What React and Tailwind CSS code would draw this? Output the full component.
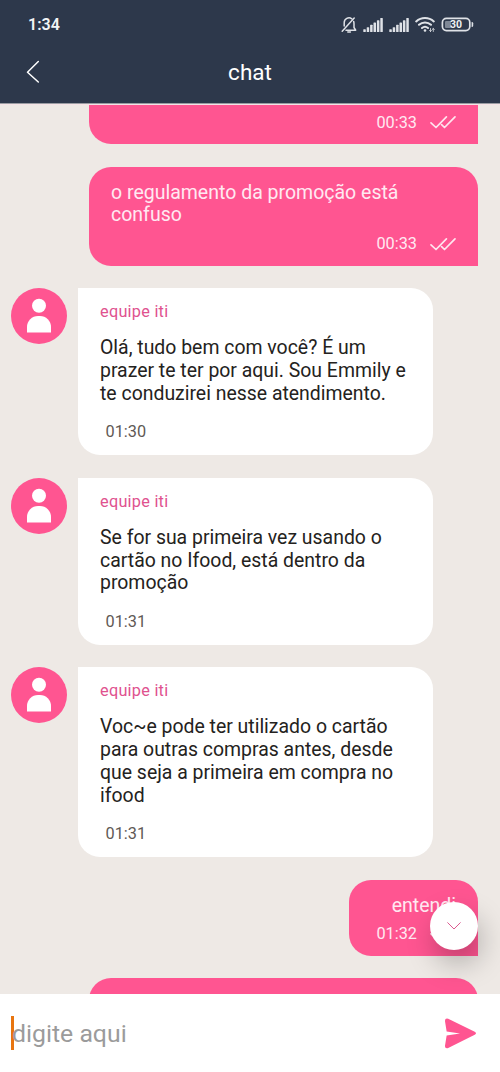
const messages = [
  { id: 1, mine: true, clipped: true, time: "00:33", lines: [] },
  {
    id: 2,
    mine: true,
    time: "00:33",
    lines: ["o regulamento da promoção está", "confuso"],
  },
  {
    id: 3,
    time: "01:30",
    lines: [
      "Olá, tudo bem com você? É um",
      "prazer te ter por aqui. Sou Emmily e",
      "te conduzirei nesse atendimento.",
    ],
  },
  {
    id: 4,
    time: "01:31",
    lines: [
      "Se for sua primeira vez usando o",
      "cartão no Ifood, está dentro da",
      "promoção",
    ],
  },
  {
    id: 5,
    time: "01:31",
    lines: [
      "Voc~e pode ter utilizado o cartão",
      "para outras compras antes, desde",
      "que seja a primeira em compra no",
      "ifood",
    ],
  },
  { id: 6, mine: true, short: true, time: "01:32", lines: ["entendi"] },
];

function SignalIcon() {
  return (
    <svg width="20" height="16" viewBox="0 0 20 16" fill="#dfe2e7">
      <rect x="0.3" y="12.2" width="2.5" height="2.8" rx="0.6" />
      <rect x="3.7" y="10.2" width="2.5" height="4.8" rx="0.6" />
      <rect x="7.1" y="7.7" width="2.5" height="7.3" rx="0.6" />
      <rect x="10.5" y="5.4" width="2.5" height="9.6" rx="0.6" />
      <rect x="13.9" y="3.2" width="2.5" height="11.8" rx="0.6" />
      <rect x="17.3" y="1" width="2.5" height="14" rx="0.6" />
    </svg>
  );
}

function StatusBar() {
  return (
    <div className="flex h-[49px] items-center justify-between pl-[28px] pr-[26px]">
      <span className="text-[16px] font-semibold leading-none text-[#f2f4f6]">
        1:34
      </span>
      <div className="flex items-center">
        <svg
          className="mr-[6px]"
          width="16"
          height="18"
          viewBox="0 0 16 18"
          fill="none"
          stroke="#dfe2e7"
          strokeWidth="1.5"
          strokeLinecap="round"
          strokeLinejoin="round"
        >
          <path d="M3.2 10V6.8a4.8 4.8 0 0 1 7.6-4M12.7 5.5q.3 1 .3 2.500v3.500l1.700 2.700H5" />
          <path d="M6.8 16h2.600M1.200 15.200 13.200 2" />
        </svg>
        <SignalIcon />
        <div className="ml-[6px]">
          <SignalIcon />
        </div>
        <svg
          className="ml-[6px]"
          width="20"
          height="17"
          viewBox="0 0 20 17"
          fill="none"
          stroke="#dfe2e7"
          strokeWidth="2"
          strokeLinecap="round"
        >
          <path d="M1.2 5.4a13 13 0 0 1 17.6 0M4 8.8a8.7 8.7 0 0 1 12 0M7 12a4.6 4.6 0 0 1 6 0" />
          <circle cx="10" cy="14.5" r="1.3" fill="#dfe2e7" stroke="none" />
          <path
            d="M15.5 12.5v3m-1-1 1 1 1-1M18.3 15.5v-3m-1 1 1-1 1 1"
            strokeWidth="0.8"
          />
        </svg>
        <svg className="ml-[6px]" width="33" height="15" viewBox="0 0 33 15">
          <rect
            x="1.4"
            y="1.4"
            width="27.4"
            height="12.2"
            rx="4"
            fill="none"
            stroke="#dfe2e7"
            strokeWidth="1.7"
          />
          <rect x="4" y="4" width="6" height="7" rx="1" fill="#7e8795" />
          <path d="M30.6 5h.6q1 .2 1 1.200v2.600q0 1-1 1.200h-.6z" fill="#dfe2e7" />
          <text
            x="15.1"
            y="11.2"
            textAnchor="middle"
            fill="#eef0f3"
            className="text-[10.5px] font-bold"
          >
            30
          </text>
        </svg>
      </div>
    </div>
  );
}

function Header() {
  return (
    <header className="h-[104px] shrink-0 border-b border-[#9a9da3] bg-[#2d384b]">
      <StatusBar />
      <div className="grid h-[46px] grid-cols-[1fr_auto_1fr] items-center">
        <button className="ml-[26px] justify-self-start" aria-label="Voltar">
          <svg
            width="14"
            height="24"
            viewBox="0 0 14 24"
            fill="none"
            stroke="#fff"
            strokeWidth="1.5"
            strokeLinecap="round"
            strokeLinejoin="round"
          >
            <path d="M12.3 1.5 1.5 12.2 12.3 22" />
          </svg>
        </button>
        <h1 className="mt-px text-[22.5px] leading-none text-white">chat</h1>
      </div>
    </header>
  );
}

function DoubleCheck() {
  return (
    <svg
      width="26"
      height="14"
      viewBox="0 0 26 14"
      fill="none"
      stroke="#ffe6ef"
      strokeWidth="1.7"
      strokeLinecap="round"
      strokeLinejoin="round"
    >
      <path d="M1 7.8 6 12.5 16.4 1.8M11.6 9.7l2.9 2.8L25 1.8" />
    </svg>
  );
}

function Avatar() {
  return (
    <div className="h-[56px] w-[56px] shrink-0 rounded-full bg-[#ff5591]">
      <svg width="56" height="56" viewBox="0 0 56 56" fill="#fff">
        <circle cx="28" cy="17.7" r="7" />
        <path d="M16 44.5V39a11 11 0 0 1 11-11h2a11 11 0 0 1 11 11v5.5z" />
      </svg>
    </div>
  );
}

function Lines({ lines }) {
  return lines.map((line) => (
    <span key={line} className="block whitespace-nowrap">
      {line}
    </span>
  ));
}

function SentMessage({ message }) {
  return (
    <div
      className={`mr-[22px] flex flex-col justify-end self-end rounded-bl-[22px] bg-[#ff5591] px-[22px] ${
        message.short
          ? "w-[129.5px] pb-[13px] pt-[15px]"
          : "w-[389px] pb-[12.5px] pt-[15px]"
      } ${message.clipped ? "h-[80px]" : "rounded-t-[22px]"}`}
    >
      {message.lines.length > 0 && (
        <p
          className={`text-[19.5px] leading-[22.8px] text-[#ffe9f1] ${
            message.short ? "text-right" : ""
          }`}
        >
          <Lines lines={message.lines} />
        </p>
      )}
      <div
        className={`flex items-center justify-end gap-[13px] text-[16.3px] leading-[19px] text-[#ffe9f1] ${
          message.short ? "mt-[6px]" : "mt-[7px]"
        }`}
      >
        <span>{message.time}</span>
        <DoubleCheck />
      </div>
    </div>
  );
}

function TeamMessage({ message }) {
  return (
    <div className="flex items-start gap-[11px] pl-[11px]">
      <Avatar />
      <div className="w-[355px] rounded-[22px] rounded-tl-none bg-white px-[22px] pb-[14px] pt-[14px]">
        <p className="text-[16.3px] leading-[19px] tracking-[0.25px] text-[#e0528f]">
          equipe iti
        </p>
        <p className="mt-[16px] text-[19.43px] leading-[22.8px] text-[#242220]">
          <Lines lines={message.lines} />
        </p>
        <p className="ml-[5.5px] mt-[16.7px] text-[16.3px] leading-[19px] text-[#5f5955]">
          {message.time}
        </p>
      </div>
    </div>
  );
}

function Composer() {
  return (
    <footer className="flex h-[78px] shrink-0 items-center justify-between bg-white pl-[11px] pr-[23px]">
      <div className="flex items-center">
        <div className="h-[34px] w-[3px] bg-[#e87510]" />
        <span className="-ml-[2px] mt-[3px] text-[24.8px] leading-none text-[#9b9b9b]">
          digite aqui
        </span>
      </div>
      <button aria-label="Enviar">
        <svg width="33" height="31" viewBox="0 0 33 32" fill="#ff5591">
          <path d="M3.8.7 31.2 14.3q2.6 1.5 0 3L3.8 31Q.2 32 .5 28.6L2.2 18 16 16 2.2 14 .5 3.3Q.3-.2 3.8.7z" />
        </svg>
      </button>
    </footer>
  );
}

export default function App() {
  return (
    <div className="flex h-screen flex-col overflow-hidden bg-[#eee9e5] font-['Roboto',sans-serif]">
      <Header />
      <main className="relative flex min-h-0 flex-1 flex-col justify-end overflow-hidden border-t border-[#f5e3e6]">
        <div className="flex flex-col gap-[22.5px]">
          {messages.map((message) =>
            message.mine ? (
              <SentMessage key={message.id} message={message} />
            ) : (
              <TeamMessage key={message.id} message={message} />
            )
          )}
          {/* Top edge of the next sent message */}
          <div className="mr-[22px] h-[15.9px] w-[389px] self-end overflow-hidden">
            <div className="h-[60px] rounded-t-[22px] bg-[#ff5591]" />
          </div>
        </div>
        <button
          className="absolute bottom-[44px] right-[22px] flex h-[48px] w-[48px] items-center justify-center rounded-full bg-white shadow-[4px_14px_28px_rgba(0,0,0,0.25)]"
          aria-label="Ir para o fim"
        >
          <svg
            width="14"
            height="8"
            viewBox="0 0 14 8"
            fill="none"
            stroke="#dc5a90"
            strokeWidth="1"
            strokeLinecap="round"
            strokeLinejoin="round"
          >
            <path d="M.7.7 7 7 13.3.7" />
          </svg>
        </button>
      </main>
      <Composer />
    </div>
  );
}
